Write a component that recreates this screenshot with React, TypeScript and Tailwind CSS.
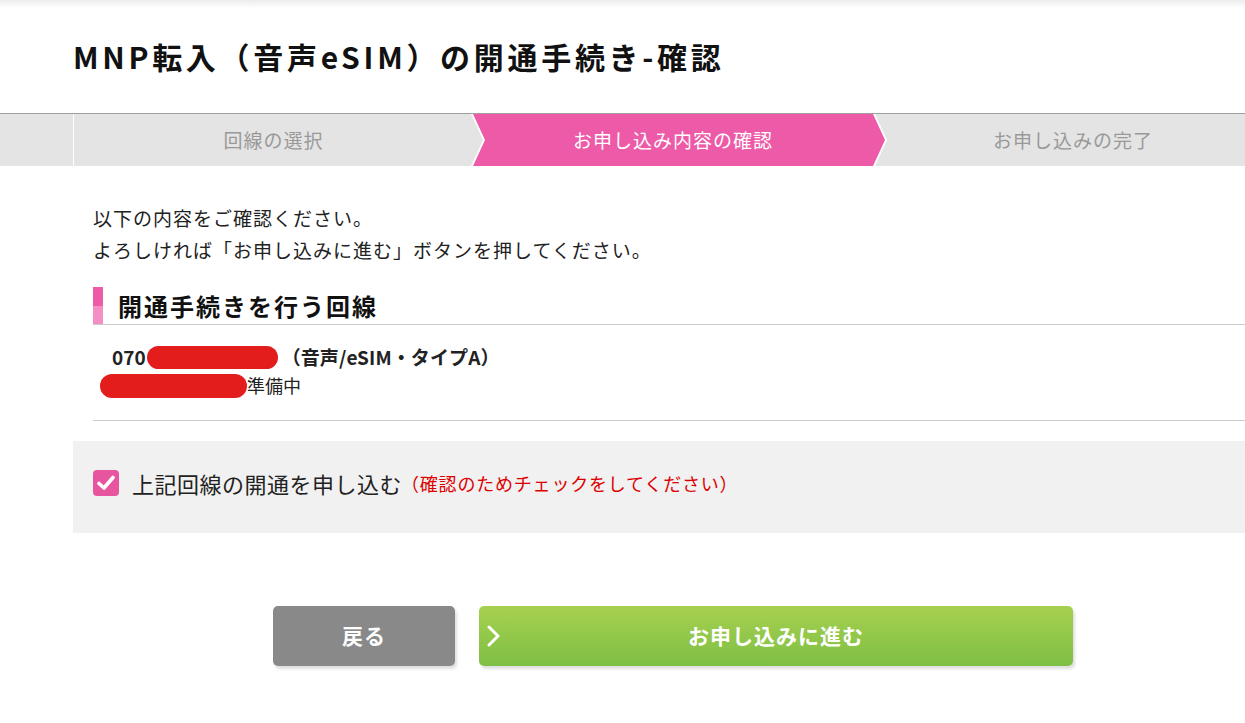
import React from "react";

const steps = ["回線の選択", "お申し込み内容の確認", "お申し込みの完了"];

const StepBar: React.FC = () => {
  return (
    <div className="h-[53px] border-t border-[#a0a0a0] bg-[#e4e4e4]">
      <div className="ml-[73px] flex h-full w-[1200px] border-l border-white">
        {/* step 1 */}
        <div className="flex w-[399px] items-center justify-center text-[19px] tracking-[1px] text-[#999]">
          {steps[0]}
        </div>
        {/* step 2 (active) */}
        <div className="-ml-[2px] -mr-[14px] h-full w-[416px] bg-white [clip-path:polygon(0_0,404px_0,416px_50%,404px_100%,0_100%,12px_50%)]">
          <div className="ml-[2px] flex h-full w-[412px] items-center justify-center bg-[#ec5aa8] pr-[12px] text-[19px] tracking-[1px] text-white [clip-path:polygon(0_0,400px_0,412px_50%,400px_100%,0_100%,12px_50%)]">
            {steps[1]}
          </div>
        </div>
        {/* step 3 */}
        <div className="flex w-[400px] items-center justify-center text-[19px] tracking-[1px] text-[#999]">
          {steps[2]}
        </div>
      </div>
    </div>
  );
};

const Redact: React.FC<{ className: string }> = ({ className }) => (
  <span className={`inline-block rounded-full bg-[#e31c1c] align-middle ${className}`} />
);

export default function App() {
  return (
    <div className="min-h-screen overflow-hidden bg-white font-['Noto_Sans_CJK_JP',sans-serif] text-[#222]">
      {/* header */}
      <div className="h-[113px] bg-gradient-to-b from-[#ececec] via-white via-[7%] to-white">
        <div className="flex h-full items-center pl-[73px] pb-[2px]">
          <h1 className="text-[30px] font-bold leading-[40px] tracking-[3.7px] text-[#111]">
            MNP転入（音声eSIM）の開通手続き-確認
          </h1>
        </div>
      </div>

      <StepBar />

      <div className="ml-[73px] w-[1200px]">
        {/* intro */}
        <div className="pl-[20px] pt-[36px] text-[19px] leading-[32px] tracking-[1px]">
          <p>以下の内容をご確認ください。</p>
          <p>よろしければ「お申し込みに進む」ボタンを押してください。</p>
        </div>

        {/* section heading */}
        <div className="ml-[20px] mt-[21px] flex items-center border-b border-[#cccccc]">
          <div className="flex h-[37px] w-[10px] flex-col">
            <div className="flex-1 bg-[#ec5aa8]" />
            <div className="flex-1 bg-[#f48fc5]" />
          </div>
          <h2 className="pl-[15px] text-[24px] font-bold leading-[37px] tracking-[2px] text-[#111]">
            開通手続きを行う回線
          </h2>
        </div>

        {/* line item */}
        <div className="ml-[20px] border-b border-[#cccccc] pb-[21px] pt-[18px]">
          <div className="flex h-[28px] items-center pl-[19px] text-[19px] font-bold">
            <span>070</span>
            <Redact className="ml-[1px] h-[23px] w-[131px]" />
            <span className="ml-[4px] tracking-[0.1px]">（音声/eSIM・タイプA）</span>
          </div>
          <div className="flex h-[28px] items-center pl-[7px] text-[18px]">
            <Redact className="mt-[2px] h-[24px] w-[147px]" />
            <span>準備中</span>
          </div>
        </div>

        {/* confirm checkbox */}
        <div className="mt-[20px] flex h-[92px] items-center bg-[#f1f1f1] pb-[8px] pl-[20px]">
          <span className="flex h-[26px] w-[26px] items-center justify-center rounded-[4px] bg-[#e8559f]">
            <svg width="18" height="16" viewBox="0 0 18 16" fill="none">
              <path d="M2 8.5 L7 13 L16 2.5" stroke="white" strokeWidth="3.6" strokeLinecap="round" strokeLinejoin="round" />
            </svg>
          </span>
          <span className="ml-[13px] text-[22px] tracking-[0.5px] text-[#222]">上記回線の開通を申し込む</span>
          <span className="-ml-[1px] text-[18px] tracking-[0.8px] text-[#dd0000]">（確認のためチェックをしてください）</span>
        </div>

        {/* buttons */}
        <div className="mt-[73px] flex justify-center gap-[24px]">
          <button className="flex h-[60px] w-[182px] items-center justify-center rounded-[5px] bg-[#898989] text-[21px] font-bold tracking-[1px] text-white shadow-[2px_3px_3px_rgba(0,0,0,0.13)]">
            戻る
          </button>
          <button className="relative flex h-[60px] w-[594px] items-center justify-center rounded-[5px] bg-gradient-to-b from-[#a7d04f] to-[#7dbf45] text-[21px] font-bold tracking-[1px] text-white shadow-[2px_3px_3px_rgba(0,0,0,0.13)]">
            <svg className="absolute left-[8px] top-1/2 -translate-y-1/2" width="13" height="22" viewBox="0 0 13 22" fill="none">
              <path d="M2 2 L11 11 L2 20" stroke="white" strokeWidth="3" strokeLinecap="round" strokeLinejoin="round" />
            </svg>
            お申し込みに進む
          </button>
        </div>
      </div>
    </div>
  );
}
